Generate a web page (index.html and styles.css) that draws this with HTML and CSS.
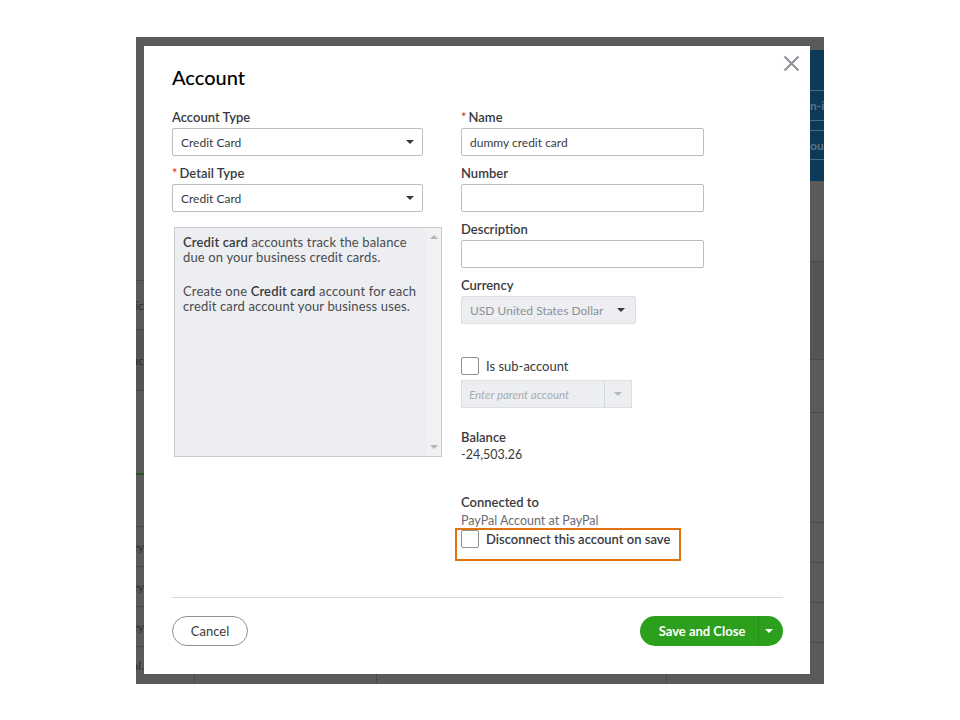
FILE: index.html
```html
<!DOCTYPE html>
<html lang="en">
<head>
    <meta charset="UTF-8">
    <title>Account</title>
    <link rel="stylesheet" href="styles.css">
</head>
<body>
    <div class="screen">
        <div class="bg-left">
            <div class="row" style="height: 243px"></div>
            <div class="row" style="height: 48px"><span>ic</span></div>
            <div class="row dark" style="height: 60px"><span>uc</span></div>
            <div class="row green" style="height: 82px"></div>
            <div class="row" style="height: 51px"></div>
            <div class="row" style="height: 39px"><span>ey</span></div>
            <div class="row" style="height: 39px"><span>ey</span></div>
            <div class="row" style="height: 39px"><span>ey</span></div>
            <div class="row last"><span>al.</span></div>
        </div>

        <div class="bg-top"></div>

        <div class="modal">
            <button class="close" aria-label="Close">
                <svg width="17" height="17" viewBox="0 0 17 17">
                    <path d="M1.5 1.5 L15.5 15.5 M15.5 1.5 L1.5 15.5" stroke="#8d9096" stroke-width="2" fill="none"/>
                </svg>
            </button>
            <div class="modal-head">
                <h1>Account</h1>
            </div>

            <div class="modal-body">
                <div class="col col-left">
                    <div class="field">
                        <label>Account Type</label>
                        <div class="select">Credit Card <i class="caret"></i></div>
                    </div>
                    <div class="field">
                        <label><b class="req">*</b>Detail Type</label>
                        <div class="select">Credit Card <i class="caret"></i></div>
                    </div>
                    <div class="info">
                        <div class="info-text">
                            <p><strong>Credit card</strong> accounts track the balance due on your business credit cards.</p>
                            <p>Create one <strong>Credit card</strong> account for each credit card account your business uses.</p>
                        </div>
                        <div class="scrollbar">
                            <i class="arrow up"></i>
                            <i class="arrow down"></i>
                        </div>
                    </div>
                </div>

                <div class="col col-right">
                    <div class="field">
                        <label><b class="req">*</b>Name</label>
                        <div class="input">dummy credit card</div>
                    </div>
                    <div class="field">
                        <label>Number</label>
                        <div class="input"></div>
                    </div>
                    <div class="field">
                        <label>Description</label>
                        <div class="input"></div>
                    </div>
                    <div class="field">
                        <label>Currency</label>
                        <div class="select disabled currency">USD United States Dollar <i class="caret"></i></div>
                    </div>

                    <div class="check-row sub">
                        <span class="checkbox"></span>
                        <span>Is sub-account</span>
                    </div>
                    <div class="combo">
                        <span class="placeholder">Enter parent account</span>
                        <span class="combo-btn"><i class="caret light"></i></span>
                    </div>

                    <div class="stat balance">
                        <label>Balance</label>
                        <div class="value">-24,503.26</div>
                    </div>

                    <div class="stat connected">
                        <label>Connected to</label>
                        <div class="value muted">PayPal Account at PayPal</div>
                    </div>
                    <div class="check-row disconnect">
                        <span class="checkbox"></span>
                        <span class="strong">Disconnect this account on save</span>
                        <div class="highlight"></div>
                    </div>
                </div>
            </div>

            <div class="modal-foot">
                <button class="btn btn-cancel">Cancel</button>
                <div class="btn-split">
                    <button class="btn btn-save">Save and Close</button>
                    <button class="btn btn-more"><i class="caret white"></i></button>
                </div>
            </div>
        </div>

        <div class="bg-bottom">
            <span style="width: 50px"></span>
            <span style="width: 181px"></span>
            <span style="width: 289px"></span>
        </div>

        <div class="bg-right">
            <div class="top-gap"></div>
            <div class="navbar">
                <div class="nav-row" style="height: 40px"></div>
                <div class="nav-row" style="height: 29px"><span>n-in</span></div>
                <div class="nav-row" style="height: 9px"></div>
                <div class="nav-row" style="height: 28px"><span>oun</span></div>
                <div class="nav-row end"></div>
            </div>
            <div class="row" style="height: 80px"></div>
            <div class="row dark" style="height: 97px"></div>
            <div class="row" style="height: 52px"></div>
            <div class="row" style="height: 109px"></div>
            <div class="row" style="height: 39px"></div>
            <div class="row" style="height: 39px"></div>
            <div class="row" style="height: 39px"></div>
        </div>
    </div>
</body>
</html>
```

FILE: styles.css
```css
:root {
    --text-color: #393a3d;
    --muted-color: #6b6c72;
    --gray-color: #8d9096;
    --border-color: #babec5;
    --disabled-bg: #eceef1;
    --green-color: #2ca01c;
    --red-color: #d52b1e;
    --backdrop: #5a5a5a;
}

body {
    margin: 0;
    background-color: #ffffff;
    font-family: Lato, 'Open Sans', Arial, sans-serif;
    color: var(--text-color);
}

.screen {
    margin: 37px 0 0 136px;
    width: 688px;
    height: 647px;
    background-color: var(--backdrop);
    display: grid;
    grid-template-columns: 8px 666px 14px;
    grid-template-rows: 9px 628px 10px;
}

/* backdrop page, mostly hidden by the modal */
.bg-left {
    grid-column: 1;
    grid-row: 1 / 4;
    display: flex;
    flex-direction: column;
    overflow: hidden;
}

.bg-right {
    grid-column: 3;
    grid-row: 1 / 4;
    display: flex;
    flex-direction: column;
    overflow: hidden;
}

.row {
    flex: none;
    border-bottom: 1px solid #4a4a4a;
    display: flex;
    align-items: center;
    justify-content: flex-end;
    font-size: 12px;
    color: #2e2e2e;
    white-space: nowrap;
}

.row.dark {
    background-color: #555555;
}

.row.green {
    border-bottom: 2px solid #1f5a1a;
}

.row.last {
    flex: 1;
    border-bottom: none;
}

.top-gap {
    height: 13px;
    flex: none;
}

.navbar {
    height: 131px;
    flex: none;
    background-color: #0c3a58;
    display: flex;
    flex-direction: column;
}

.nav-row {
    flex: none;
    border-bottom: 1px solid #4e6d82;
    font-size: 12px;
    font-weight: 700;
    color: #5d7487;
    display: flex;
    align-items: center;
    white-space: nowrap;
}

.nav-row.end {
    flex: 1;
    border-bottom: none;
}

.bg-top {
    grid-column: 2;
    grid-row: 1;
}

.bg-bottom {
    grid-column: 2;
    grid-row: 3;
    display: flex;
}

.bg-bottom span {
    border-right: 1px dotted #3a3a3a;
    flex: none;
}

/* modal */
.modal {
    grid-column: 2;
    grid-row: 2;
    background-color: #ffffff;
    position: relative;
    padding: 0 27px 0 28px;
    display: flex;
    flex-direction: column;
}

.close {
    position: absolute;
    top: 9px;
    right: 10px;
    padding: 0;
    border: none;
    background: none;
    width: 17px;
    height: 17px;
}

.modal-head {
    height: 62px;
    padding-top: 18px;
    box-sizing: border-box;
}

.modal-head h1 {
    margin: 0;
    font-size: 20px;
    line-height: 26px;
    font-weight: 500;
    color: #000000;
}

.modal-body {
    flex: 1;
    display: flex;
    gap: 19px;
}

.col-left {
    width: 270px;
}

.col-right {
    width: 243px;
}

.field {
    margin-bottom: 8px;
}

label {
    display: block;
    font-size: 13px;
    line-height: 18px;
    font-weight: 600;
    margin-bottom: 2px;
    color: var(--text-color);
}

.req {
    color: var(--red-color);
    font-weight: 400;
    margin-right: 2px;
}

.select,
.input {
    box-sizing: border-box;
    height: 28px;
    border: 1px solid var(--border-color);
    border-radius: 2px;
    padding: 0 8px;
    font-size: 12px;
    display: flex;
    align-items: center;
    justify-content: space-between;
}

.col-left .select {
    width: 251px;
}

.select.disabled {
    background-color: var(--disabled-bg);
    border-color: #dcdee2;
    color: var(--gray-color);
}

.currency {
    width: 175px;
    padding-right: 10px;
}

.caret {
    width: 0;
    height: 0;
    border-left: 4px solid transparent;
    border-right: 4px solid transparent;
    border-top: 4px solid var(--text-color);
}

.caret.light {
    border-top-color: #b5b8be;
}

.caret.white {
    border-top-color: #ffffff;
}

.info {
    margin: 15px 0 0 2px;
    box-sizing: border-box;
    height: 230px;
    border: 1px solid #c9cbd0;
    background-color: var(--disabled-bg);
    display: flex;
}

.info-text {
    flex: 1;
    padding: 7px 8px;
    font-size: 13px;
    letter-spacing: 0.15px;
    line-height: 15px;
    color: #4a4b4f;
}

.info-text p {
    margin: 0 0 19px;
}

.info-text strong {
    font-weight: 600;
    color: var(--text-color);
}

.scrollbar {
    width: 15px;
    background-color: #f1f1f2;
    display: flex;
    flex-direction: column;
    justify-content: space-between;
    align-items: center;
    padding: 7px 0;
}

.arrow {
    width: 0;
    height: 0;
    border-left: 4px solid transparent;
    border-right: 4px solid transparent;
}

.arrow.up {
    border-bottom: 4px solid #b3b5b9;
}

.arrow.down {
    border-top: 4px solid #b3b5b9;
}

.check-row {
    display: flex;
    align-items: center;
    gap: 7px;
    font-size: 13px;
}

.checkbox {
    width: 18px;
    height: 18px;
    box-sizing: border-box;
    border: 1px solid var(--gray-color);
    border-radius: 2px;
    background-color: #ffffff;
    flex: none;
}

.sub {
    margin-top: 33px;
}

.combo {
    margin-top: 5px;
    width: 171px;
    height: 28px;
    box-sizing: border-box;
    border: 1px solid #dcdee2;
    background-color: var(--disabled-bg);
    display: flex;
}

.placeholder {
    flex: 1;
    padding-left: 7px;
    font-size: 11.5px;
    font-style: italic;
    color: #a9acb2;
    display: flex;
    align-items: center;
}

.combo-btn {
    width: 26px;
    border-left: 1px solid #d4d7dc;
    display: flex;
    align-items: center;
    justify-content: center;
}

.stat label {
    margin-bottom: 0;
}

.stat .value {
    font-size: 12.5px;
    line-height: 18px;
}

.connected .value {
    margin-top: 1px;
}

.value.muted {
    color: var(--muted-color);
}

.balance {
    margin-top: 20px;
}

.connected {
    margin-top: 29px;
}

.disconnect {
    position: relative;
}

.strong {
    font-weight: 600;
}

/* annotation box drawn over the disconnect option */
.highlight {
    position: absolute;
    left: -6px;
    top: -2px;
    width: 226px;
    height: 33px;
    box-sizing: border-box;
    border: 2px solid #e2720f;
}

.modal-foot {
    border-top: 1px solid #d4d7dc;
    padding: 18px 0 28px;
    display: flex;
    justify-content: space-between;
}

.btn {
    font-family: inherit;
    height: 30px;
    border-radius: 15px;
    font-size: 13px;
    cursor: pointer;
}

.btn-cancel {
    width: 76px;
    border: 1px solid var(--gray-color);
    background-color: #ffffff;
    color: var(--text-color);
}

.btn-split {
    display: flex;
}

.btn-save {
    width: 118px;
    border: none;
    border-radius: 15px 0 0 15px;
    background-color: var(--green-color);
    color: #ffffff;
    font-weight: 700;
    padding: 0 0 0 6px;
}

.btn-more {
    width: 25px;
    border: none;
    border-left: 1px solid #259016;
    border-radius: 0 15px 15px 0;
    background-color: var(--green-color);
    display: flex;
    align-items: center;
    justify-content: center;
    padding: 0 4px 0 0;
}
```
